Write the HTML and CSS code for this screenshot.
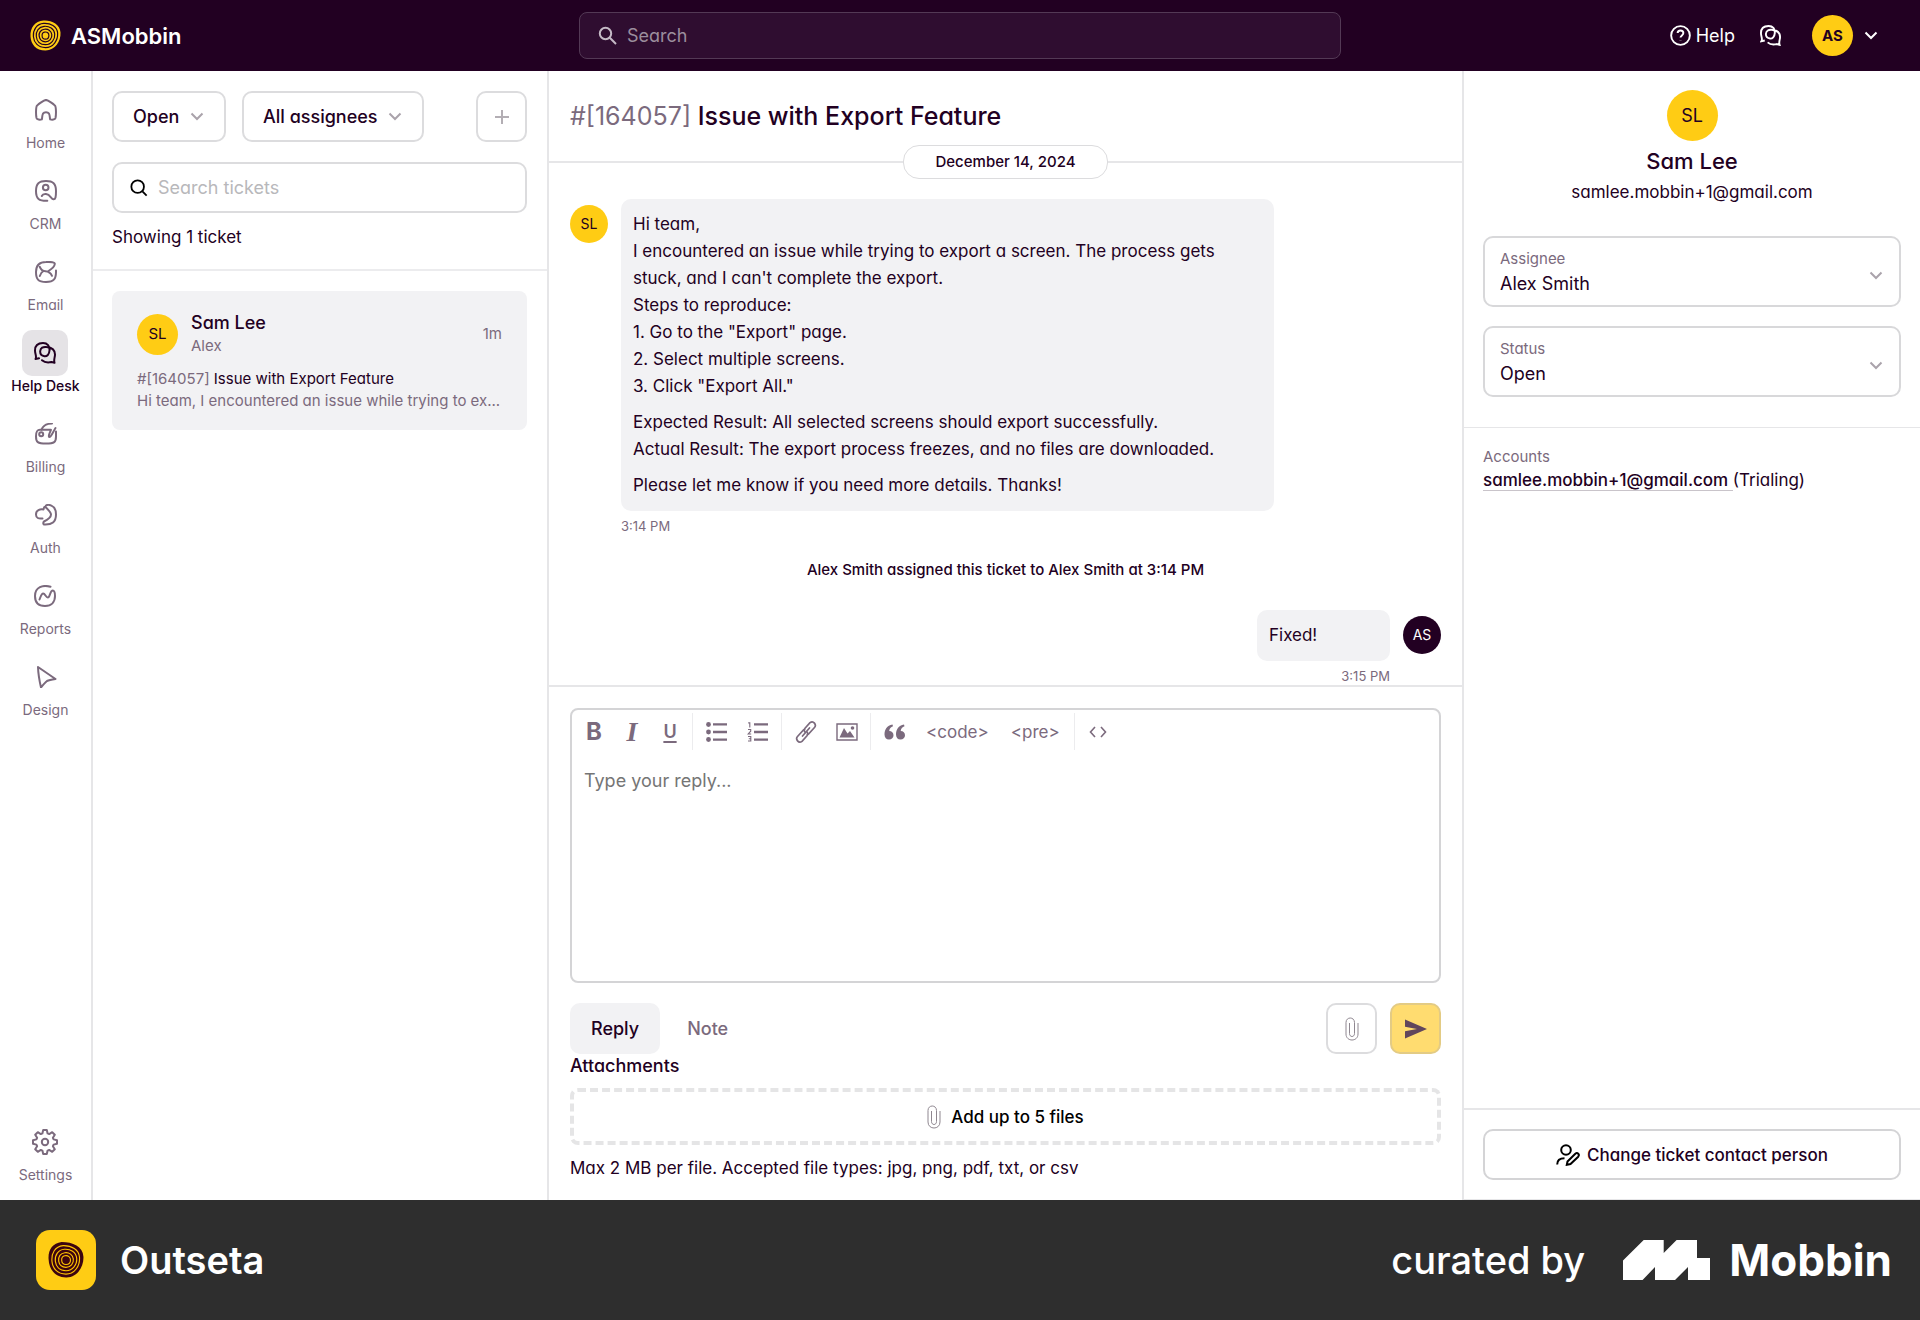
FILE: index.html
```html
<!DOCTYPE html>
<html lang="en">
<head>
    <meta charset="UTF-8">
    <meta name="viewport" content="width=device-width, initial-scale=1.0">
    <title>Help Desk - Issue with Export Feature</title>
    <link rel="stylesheet" href="styles.css">
</head>
<body>
    <header class="topbar">
        <a href="#" class="brand">
            <svg class="brand-logo" viewBox="0 0 32 32">
                <path fill="#ffcc14" d="M14 .5C22 0 31 4 31.5 13C32 22 26 31.5 16 31.5C6 31.5 1 25 .5 17C0 8 5 1 14 .5Z"/>
                <g fill="none" stroke="#220022" stroke-width="1.2">
                    <path d="M14 3.5C21 3 28 6.500 28.500 13.500C29 21 24 28.500 16 28.500C8 28.500 4 23 3.500 17C3 10 7 4 14 3.500Z"/>
                    <path d="M14.500 6.500C20 6 25 9 25.500 14.500C26 20 22 25.500 16 25.500C10 25.500 7 21.500 6.500 17C6 11.500 9 7 14.500 6.500Z"/>
                    <path d="M15 9.500C19 9 22 11.500 22.500 15C23 19 20 22.500 16 22.500C12 22.500 10 20 9.500 17C9 13 11 10 15 9.500Z"/>
                    <path d="M15 12.500C18 12 19.500 13.500 19.500 16C19.500 18.500 18.500 19.800 16 19.800C13.500 19.800 12.600 18.500 12.500 16.500C12.300 14.500 13 12.800 15 12.500Z"/>
                </g>
            </svg>
            <span>ASMobbin</span>
        </a>
        <label class="global-search">
            <svg viewBox="0 0 20 20"><circle cx="7.500" cy="7.500" r="5.700"/><path d="M11.800 11.800L18 18"/></svg>
            <input type="search" placeholder="Search" aria-label="Search">
        </label>
        <div class="topbar-actions">
            <a href="#" class="help-link">
                <svg viewBox="0 0 22 22"><circle cx="11" cy="11" r="9.800"/><path d="M8 8.500C8 4.800 14 4.800 14 8.500C14 11 11 10.800 11 13.200"/><path d="M11 16.200v.3" stroke-width="2.400"/></svg>
                Help
            </a>
            <button class="icon-button" aria-label="Tickets">
                <svg viewBox="0 0 22 22"><path d="M5 16.300L1.500 17C3 14.500 1 12 1 8.500C1 3.500 4 1 9 1C13.500 1 15.800 4 15.500 8.500C15.200 12.500 13 14.500 10.500 14.200C7.500 13.800 6 12 6.200 9.200C6.500 6 9 4.500 12.500 5C18 5.500 21 8 21 12.500C21 15.500 19.500 17.500 20.500 20.800L17.500 20C14 20.800 10 20 8 18.200"/></svg>
            </button>
            <button class="account-button" aria-label="Account">
                <span class="avatar avatar-bold">AS</span>
                <svg class="chevron" viewBox="0 0 14 9"><path d="M1.500 1.500L7 7L12.500 1.500"/></svg>
            </button>
        </div>
    </header>

    <div class="app">
        <nav class="sidebar">
            <a href="#" class="nav-item">
                <span class="nav-icon"><svg viewBox="0 0 22 22"><path d="M11 .9C9 1.200 4 4.600 2 6.600C.8 8 .8 16 1.500 19C2 20.800 5 21 6.800 20.400C7.300 19 7 16.500 8 14.600C9.200 12.800 12.800 12.800 14 14.600C15 16.500 14.700 19 15.200 20.400C17 21 20 20.800 20.500 19C21.200 16 21.200 8 20 6.600C18 4.600 13 1.200 11 .9Z"/></svg></span>
                Home
            </a>
            <a href="#" class="nav-item">
                <span class="nav-icon"><svg viewBox="0 0 22 22"><path d="M12.300 20.800C4 21 1 19 1 11C1 3.500 4 1 11 1S21 3.500 21 11C21 17 20.500 19.500 18.500 19.300C16 19 15.500 14.500 11 14C9 13.800 7.500 14.500 6.800 16"/><circle cx="10.700" cy="7.500" r="2.800"/></svg></span>
                CRM
            </a>
            <a href="#" class="nav-item">
                <span class="nav-icon"><svg viewBox="0 0 22 22"><path d="M21 9.500C21.200 18 19 21 11 21S1 18 1 11S4 1 11 1C16 .8 20 1 19.800 3C19.500 5.500 16 8.500 13.500 10"/><path d="M4.800 5.800C5.800 8.500 7.500 10 10.500 10.200S15.500 11.500 17 14.800M4.800 15C5.500 13 6.500 11.200 8.200 10.200"/></svg></span>
                Email
            </a>
            <a href="#" class="nav-item active">
                <span class="nav-icon"><svg viewBox="0 0 22 22"><path d="M5 16.300L1.500 17C3 14.500 1 12 1 8.500C1 3.500 4 1 9 1C13.500 1 15.800 4 15.500 8.500C15.200 12.500 13 14.500 10.500 14.200C7.500 13.800 6 12 6.200 9.200C6.500 6 9 4.500 12.500 5C18 5.500 21 8 21 12.500C21 15.500 19.500 17.500 20.500 20.800L17.500 20C14 20.800 10 20 8 18.200"/></svg></span>
                Help Desk
            </a>
            <a href="#" class="nav-item">
                <span class="nav-icon"><svg viewBox="0 0 22 22"><path d="M17 .6C11 .6 8 3 6.500 6.600"/><path d="M20.500 5C18 9 16 14 14.500 14S14.500 10 16 6.800H5C2 6.800 1 8.500 1 13.500C1 19 2.500 20.600 11 20.600S21 19 21 13.500V8.500"/><circle cx="6.200" cy="11.300" r="2"/></svg></span>
                Billing
            </a>
            <a href="#" class="nav-item">
                <span class="nav-icon"><svg viewBox="0 0 22 22"><path d="M11 1.500C12 .8 21 -.5 21 10.500C21 18 17 21 9 20.500C8 20 8 18.500 9 17.500C13 15.500 16 12.500 16 10.500C16 8.500 12 4.500 10.500 3C9 2.200 9 4 8.500 5.500C5 5 1 6 1 10.500C1 14 3.500 15 7.500 14.500"/></svg></span>
                Auth
            </a>
            <a href="#" class="nav-item">
                <span class="nav-icon"><svg viewBox="0 0 22 22"><path d="M16.500 1.800C9 -.5 1 2 1 11C1 18 4.500 21 11 21S21 17 21 11C21 8 20.500 5.500 18.800 5.500C16 5.500 16 12.500 13.800 12.500C11.800 12.500 11.200 8.500 9.200 8.500C7.500 8.500 6.500 12 5.500 14.500"/></svg></span>
                Reports
            </a>
            <a href="#" class="nav-item">
                <span class="nav-icon"><svg viewBox="0 0 22 22"><path d="M3 1L20.500 13C17 13.500 14 14 12 15C10 16.500 8 19 6 21.500C4.500 15 3.200 8 3 1Z"/></svg></span>
                Design
            </a>
            <a href="#" class="nav-item nav-settings">
                <span class="nav-icon"><svg class="gear" viewBox="-13 -13 26 26"><path d="M-2.600 -8.600L-1.800 -12H1.800L2.600 -8.600L4.200 -7.900L7.200 -9.800L9.800 -7.200L7.900 -4.200L8.600 -2.600L12 -1.800V1.800L8.600 2.600L7.900 4.200L9.800 7.200L7.200 9.800L4.200 7.900L2.600 8.600L1.800 12H-1.800L-2.600 8.600L-4.200 7.900L-7.200 9.800L-9.800 7.200L-7.900 4.200L-8.600 2.600L-12 1.800V-1.800L-8.600 -2.600L-7.900 -4.200L-9.800 -7.200L-7.200 -9.800L-4.200 -7.900Z"/><circle r="3.200"/></svg></span>
                Settings
            </a>
        </nav>

        <section class="ticket-list">
            <div class="filters">
                <div class="filter-row">
                    <div class="filter-select">
                        <select aria-label="Status filter"><option>Open</option></select>
                        <svg class="chevron" viewBox="0 0 14 9"><path d="M1.500 1.500L7 7L12.500 1.500"/></svg>
                    </div>
                    <div class="filter-select">
                        <select aria-label="Assignee filter"><option>All assignees</option></select>
                        <svg class="chevron" viewBox="0 0 14 9"><path d="M1.500 1.500L7 7L12.500 1.500"/></svg>
                    </div>
                    <button class="square-button add-button" aria-label="New ticket">
                        <svg width="16" height="16" viewBox="0 0 16 16"><path d="M8 1v14M1 8h14"/></svg>
                    </button>
                </div>
                <label class="ticket-search">
                    <svg viewBox="0 0 20 20"><circle cx="8.500" cy="8.500" r="7"/><path d="M13.800 13.800L18.500 18.500"/></svg>
                    <input type="search" placeholder="Search tickets" aria-label="Search tickets">
                </label>
                <p class="ticket-count">Showing 1 ticket</p>
            </div>
            <a href="#" class="ticket-card">
                <div class="ticket-head">
                    <span class="avatar">SL</span>
                    <div class="ticket-people">
                        <strong>Sam Lee</strong>
                        <span>Alex</span>
                    </div>
                    <time>1m</time>
                </div>
                <p class="ticket-subject"><span>#[164057]</span> Issue with Export Feature</p>
                <p class="ticket-preview">Hi team, I encountered an issue while trying to ex...</p>
            </a>
        </section>

        <main class="thread">
            <h1><span>#[164057]</span> Issue with Export Feature</h1>
            <div class="date-divider"><span>December 14, 2024</span></div>

            <div class="messages">
                <article class="message">
                    <span class="avatar avatar-small">SL</span>
                    <div class="message-body">
                        <div class="bubble">
                            <p>Hi team,<br>I encountered an issue while trying to export a screen. The process gets<br>stuck, and I can't complete the export.<br>Steps to reproduce:<br>1. Go to the "Export" page.<br>2. Select multiple screens.<br>3. Click "Export All."</p>
                            <p>Expected Result: All selected screens should export successfully.<br>Actual Result: The export process freezes, and no files are downloaded.</p>
                            <p>Please let me know if you need more details. Thanks!</p>
                        </div>
                        <time>3:14 PM</time>
                    </div>
                </article>
                <p class="event">Alex Smith assigned this ticket to Alex Smith at 3:14 PM</p>
                <article class="message outgoing">
                    <span class="avatar avatar-small avatar-dark">AS</span>
                    <div class="message-body">
                        <div class="bubble"><p>Fixed!</p></div>
                        <time>3:15 PM</time>
                    </div>
                </article>
            </div>

            <form class="composer">
                <div class="editor">
                    <div class="toolbar">
                        <div class="tool-group tool-group-text">
                            <button type="button" class="tool-bold">B</button>
                            <button type="button" class="tool-italic">I</button>
                            <button type="button" class="tool-underline">U</button>
                        </div>
                        <div class="tool-group">
                            <button type="button" aria-label="Bullet list"><svg width="22" height="20" viewBox="0 0 22 20"><circle cx="2.500" cy="2.500" r="2.400"/><circle cx="2.500" cy="10" r="2.400"/><circle cx="2.500" cy="17.500" r="2.400"/><path d="M7 1.200h14v2.400H7zM7 8.800h14v2.400H7zM7 16.400h14v2.400H7z"/></svg></button>
                            <button type="button" aria-label="Numbered list"><svg width="22" height="20" viewBox="0 0 22 20"><path d="M7 1.200h14v2.400H7zM7 8.800h14v2.400H7zM7 16.400h14v2.400H7z"/><path d="M1.200 .9h1.600v4.600M1 7.500h2.700v1.700L1.200 12h3M1 14.500h2.800v4.500H1M1.800 16.700h2" fill="none" stroke="currentColor" stroke-width="1.100"/></svg></button>
                        </div>
                        <div class="tool-group">
                            <button type="button" aria-label="Link"><svg width="22" height="24" viewBox="0 0 22 24" fill="none" stroke="currentColor" stroke-width="1.700" stroke-linecap="round"><path d="M7.500 16L14.500 8"/><path d="M9.500 9.500L8.500 10L2.500 16.500C.2 19 3.500 24 7 21.300L12 15.700C13 14.500 12.800 13 12 12"/><path d="M12.500 14.500L13.500 14L19.500 7.500C21.800 5 18.500 0 15 2.700L10 8.300C9 9.500 9.200 11 10 12"/></svg></button>
                            <button type="button" aria-label="Image"><svg width="22" height="18" viewBox="0 0 22 18"><path d="M1 1h20v16H1z" fill="none" stroke="currentColor" stroke-width="1.400"/><path d="M3.500 14.500L8 5l3.500 5.500L14 8l4.500 6.500z"/><circle cx="16.500" cy="5" r="1.800"/></svg></button>
                        </div>
                        <div class="tool-group">
                            <button type="button" aria-label="Quote"><svg width="22" height="16" viewBox="0 0 22 16"><path d="M8.500 .5C3 1.500 .5 5.500 .5 10.500C.5 13.500 2.300 15.500 5 15.500C7.700 15.500 9.500 13.700 9.500 11.200C9.500 8.700 7.800 7 5.200 7C5.500 4.500 6.800 3 9 2.200Z"/><path d="M20 .5C14.500 1.500 12 5.500 12 10.500C12 13.500 13.800 15.500 16.500 15.500C19.200 15.500 21 13.700 21 11.200C21 8.700 19.300 7 16.700 7C17 4.500 18.300 3 20.500 2.200Z"/></svg></button>
                            <button type="button" class="tool-tag">&lt;code&gt;</button>
                            <button type="button" class="tool-tag">&lt;pre&gt;</button>
                        </div>
                        <div class="tool-group">
                            <button type="button" aria-label="Source"><svg width="18" height="12" viewBox="0 0 18 12" fill="none" stroke="currentColor" stroke-width="1.600"><path d="M6 1L1.500 6L6 11M12 1l4.500 5L12 11"/></svg></button>
                        </div>
                    </div>
                    <textarea placeholder="Type your reply..." aria-label="Reply"></textarea>
                </div>
                <div class="composer-actions">
                    <button type="button" class="tab active">Reply</button>
                    <button type="button" class="tab">Note</button>
                    <button type="button" class="square-button attach-button" aria-label="Attach file">
                        <svg class="clip" viewBox="0 0 14 24"><path d="M4.500 6V16.500C4.500 20.500 9.500 20.500 9.500 16.500V5.500C9.500 -.5 1 -.5 1 5.500V17C1 25 13 25 13 17V6"/></svg>
                    </button>
                    <button type="submit" class="square-button send-button" aria-label="Send">
                        <svg width="22" height="20" viewBox="0 0 22 20"><path d="M0 .5L22 10L0 19.500V12.300L12 10L0 7.700Z"/></svg>
                    </button>
                </div>
                <p class="attachments-title">Attachments</p>
                <button type="button" class="dropzone">
                    <svg class="clip" viewBox="0 0 14 24"><path d="M4.500 6V16.500C4.500 20.500 9.500 20.500 9.500 16.500V5.500C9.500 -.5 1 -.5 1 5.500V17C1 25 13 25 13 17V6"/></svg>
                    Add up to 5 files
                </button>
                <p class="attachments-hint">Max 2 MB per file. Accepted file types: jpg, png, pdf, txt, or csv</p>
            </form>
        </main>

        <aside class="details">
            <div class="contact">
                <span class="avatar avatar-large">SL</span>
                <h2>Sam Lee</h2>
                <p>samlee.mobbin+1@gmail.com</p>
            </div>
            <div class="fields">
                <div class="field">
                    <label for="assignee">Assignee</label>
                    <select id="assignee"><option>Alex Smith</option></select>
                    <svg class="chevron" viewBox="0 0 14 9"><path d="M1.500 1.500L7 7L12.500 1.500"/></svg>
                </div>
                <div class="field">
                    <label for="status">Status</label>
                    <select id="status"><option>Open</option></select>
                    <svg class="chevron" viewBox="0 0 14 9"><path d="M1.500 1.500L7 7L12.500 1.500"/></svg>
                </div>
            </div>
            <div class="accounts">
                <h3>Accounts</h3>
                <p><a href="#">samlee.mobbin+1@gmail.com </a>(Trialing)</p>
            </div>
            <div class="details-footer">
                <button class="change-button">
                    <svg viewBox="0 0 24 22"><circle cx="10" cy="6" r="4.800"/><path d="M1.200 20.500C1.200 16.500 4 14.300 8.500 14.300"/><path d="M11.500 17.500L19.300 9.700C21.500 8 24 10.500 22.200 12.700L14.500 20L10.800 20.800Z"/></svg>
                    Change ticket contact person
                </button>
            </div>
        </aside>
    </div>

    <footer class="credit">
        <div class="credit-app">
            <span class="app-icon">
                <svg viewBox="0 0 32 32">
                    <path fill="#3c0410" d="M12 0C22 0 31 4 31.500 13C32 22 26 31.800 16 31.500C7 31.500 1 25 .5 15C0 7 4 1 12 0Z"/>
                    <g fill="none" stroke="#ffc400" stroke-width="1">
                        <path d="M13.500 3.200C21 3 27.500 7 28 13.500C28.500 21 24 28.500 16 28.500C8 28.500 4 23 3.500 17C3 10 6 4 13.500 3.200Z"/>
                        <path d="M14.500 6.500C20 6 25 9 25.500 14.500C26 20 22 25.500 16 25.500C10 25.500 7 21.500 6.500 17C6 11.500 9 7 14.500 6.500Z"/>
                        <path d="M15 9.500C19 9 22 11.500 22.500 15C23 19 20 22.500 16 22.500C12 22.500 10 20 9.500 17C9 13 11 10 15 9.500Z"/>
                        <path d="M15 12.200C18 11.700 20 13.500 20 16C20 18.500 18.500 20 16 20C13.500 20 12.300 18.500 12.200 16.500C12 14.500 13 12.500 15 12.200Z"/>
                    </g>
                </svg>
            </span>
            <span class="app-name">Outseta</span>
        </div>
        <div class="credit-source">
            <span>curated by</span>
            <svg viewBox="0 0 87 40" fill="#fff"><path d="M0 20.500L20.700 0H40.700V13L53.600 0H74V18H87V40H65V27L52 40H32V27L19.600 40H0Z"/></svg>
            <strong>Mobbin</strong>
        </div>
    </footer>
</body>
</html>
```
FILE: styles.css
```css
* {
    margin: 0;
    padding: 0;
    box-sizing: border-box;
}

body {
    font-family: Inter, sans-serif;
    font-feature-settings: 'cv11';
    font-size: 17px;
    line-height: 24px;
    color: #220022;
    background: #fff;
    min-height: 100vh;
    display: flex;
    flex-direction: column;
}

button,
input,
select,
textarea {
    font: inherit;
    font-feature-settings: inherit;
    color: inherit;
    background: none;
    border: none;
    outline: none;
    appearance: none;
}

input,
select,
textarea {
    font-size: 18px;
}

button {
    cursor: pointer;
}

a {
    color: inherit;
    text-decoration: none;
}

svg {
    display: block;
    flex-shrink: 0;
}

/* Top bar */
.topbar {
    height: 71px;
    background: #220022;
    color: #fff;
    display: grid;
    grid-template-columns: 1fr minmax(0, 762px) 1fr;
    align-items: center;
    padding: 0 30px;
}

.brand {
    display: flex;
    align-items: center;
    gap: 10px;
    font-size: 22px;
    font-weight: 600;
}

.brand-logo {
    width: 31px;
    height: 31px;
}

.global-search {
    height: 47px;
    display: flex;
    align-items: center;
    gap: 9px;
    padding: 0 18px;
    background: #2f0d30;
    border: 1px solid #533955;
    border-radius: 8px;
}

.global-search svg {
    width: 20px;
    height: 20px;
    fill: none;
    stroke: #c5bac6;
    stroke-width: 2;
}

.global-search input {
    flex: 1;
}

.global-search input::placeholder {
    color: #9c8e9d;
}

.topbar-actions {
    display: flex;
    align-items: center;
    justify-content: flex-end;
    padding-right: 12px;
}

.topbar-actions svg {
    fill: none;
    stroke: #fff;
    stroke-width: 2;
}

.help-link {
    display: flex;
    align-items: center;
    gap: 5px;
    margin-right: 25px;
    font-size: 18px;
}

.help-link svg,
.icon-button svg {
    width: 21px;
    height: 21px;
}

.icon-button {
    margin-right: 31px;
}

.account-button {
    display: flex;
    align-items: center;
    gap: 11px;
}

.chevron {
    width: 14px;
    height: 9px;
    fill: none;
    stroke: #aaa3ab;
    stroke-width: 2;
}

.avatar {
    width: 41px;
    height: 41px;
    border-radius: 50%;
    background: #ffcc14;
    color: #220022;
    display: flex;
    align-items: center;
    justify-content: center;
    flex-shrink: 0;
    font-size: 15px;
}

.avatar-bold {
    font-weight: 700;
}

.avatar-small {
    width: 38px;
    height: 38px;
    font-size: 14px;
}

.avatar-large {
    width: 51px;
    height: 51px;
    font-size: 18px;
}

.avatar-dark {
    background: #220022;
    color: #fff;
}

/* Main layout */
.app {
    flex: 1;
    display: grid;
    grid-template-columns: 93px 456px minmax(0, 1fr) 458px;
}

.sidebar {
    border-right: 2px solid #e6e6e8;
    display: flex;
    flex-direction: column;
    align-items: center;
    gap: 15px;
    padding: 16px 0 15px;
}

.nav-item {
    display: flex;
    flex-direction: column;
    align-items: center;
    font-size: 14px;
    line-height: 20px;
    color: #7b6a7d;
    white-space: nowrap;
}

.nav-icon {
    width: 46px;
    height: 46px;
    border-radius: 10px;
    display: flex;
    align-items: center;
    justify-content: center;
}

.nav-icon svg {
    width: 22px;
    height: 22px;
    fill: none;
    stroke: currentColor;
    stroke-width: 2;
    stroke-linecap: round;
    stroke-linejoin: round;
}

.nav-icon .gear {
    width: 26px;
    height: 26px;
}

.nav-item.active {
    color: #220022;
    font-weight: 500;
}

.nav-item.active .nav-icon {
    background: #e5e3e6;
}

.nav-settings {
    margin-top: auto;
}

/* Ticket list */
.ticket-list {
    border-right: 2px solid #e6e6e8;
}

.filters {
    padding: 20px 20px 20px 19px;
    border-bottom: 2px solid #ececee;
}

.filter-row {
    display: flex;
    gap: 16px;
    margin-bottom: 20px;
}

.filter-select {
    position: relative;
}

.filter-select select {
    height: 51px;
    padding: 0 44px 0 19px;
    border: 2px solid #dcdcde;
    border-radius: 10px;
    font-weight: 500;
}

.filter-select .chevron {
    position: absolute;
    right: 22px;
    top: 21px;
    pointer-events: none;
}

.square-button {
    width: 51px;
    height: 51px;
    border: 2px solid #dcdcde;
    border-radius: 10px;
    display: flex;
    align-items: center;
    justify-content: center;
}

.add-button {
    margin-left: auto;
}

.add-button svg {
    stroke: #b3aeb4;
    stroke-width: 2;
}

.ticket-search {
    height: 51px;
    display: flex;
    align-items: center;
    gap: 10px;
    padding: 0 16px;
    border: 2px solid #dcdcde;
    border-radius: 10px;
}

.ticket-search svg {
    width: 18px;
    height: 18px;
    fill: none;
    stroke: #000;
    stroke-width: 2;
}

.ticket-search input {
    flex: 1;
}

.ticket-search input::placeholder {
    color: #b8b8bb;
}

.ticket-count {
    margin-top: 12px;
}

.ticket-card {
    display: block;
    margin: 20px 20px 0 19px;
    padding: 20px 25px 18px;
    background: #f2f2f4;
    border-radius: 8px;
}

.ticket-head {
    display: flex;
    align-items: center;
    gap: 13px;
    margin-bottom: 11px;
}

.ticket-people {
    flex: 1;
    display: flex;
    flex-direction: column;
}

.ticket-people strong {
    font-size: 18px;
    font-weight: 500;
    line-height: 24px;
}

.ticket-people span,
.ticket-head time,
.ticket-preview,
.ticket-subject span {
    color: #7b6a7d;
}

.ticket-people span,
.ticket-head time,
.ticket-preview,
.ticket-subject {
    font-size: 15px;
    line-height: 22px;
}

.ticket-preview {
    white-space: nowrap;
}

/* Thread */
.thread {
    display: flex;
    flex-direction: column;
}

.thread h1 {
    padding: 29px 21px 12px;
    font-size: 25px;
    line-height: 33px;
    font-weight: 500;
}

.thread h1 span {
    color: #7b6a7d;
    font-weight: 400;
}

.date-divider {
    display: flex;
    align-items: center;
}

.date-divider::before,
.date-divider::after {
    content: '';
    flex: 1;
    height: 2px;
    background: #e6e6e8;
}

.date-divider span {
    padding: 4px 31px;
    border: 1px solid #dcdcde;
    border-radius: 16px;
    font-size: 15px;
    font-weight: 500;
}

.messages {
    flex: 1;
    padding: 20px 21px 0;
}

.message {
    display: flex;
    gap: 13px;
}

.message .avatar {
    margin-top: 6px;
}

.message-body {
    width: 75%;
    min-width: 133px;
}

.bubble {
    padding: 12px;
    background: #f2f2f4;
    border-radius: 10px;
    line-height: 27px;
}

.bubble p + p {
    margin-top: 9px;
}

.message time {
    display: block;
    font-size: 13px;
    line-height: 18px;
    margin-top: 6px;
    color: #7b6a7d;
}

.message.outgoing {
    flex-direction: row-reverse;
}

.outgoing .message-body {
    width: auto;
}

.outgoing time {
    text-align: right;
}

.event {
    margin: 23px 0 28px;
    text-align: center;
    font-size: 15px;
    font-weight: 500;
}

.composer {
    border-top: 2px solid #e6e6e8;
    padding: 21px 21px 20px;
}

.editor {
    border: 2px solid #d4d4d6;
    border-radius: 8px;
    height: 275px;
    display: flex;
    flex-direction: column;
}

.toolbar {
    display: flex;
    padding-top: 3px;
    color: #7b6a7d;
    font-feature-settings: normal;
}

.tool-group {
    display: flex;
    height: 37px;
    padding: 0 3px;
}

.tool-group + .tool-group {
    border-left: 1px solid #ececee;
}

.tool-group button {
    width: 41px;
    display: flex;
    align-items: center;
    justify-content: center;
}

.tool-group-text button {
    width: 38px;
}

.tool-group svg {
    fill: currentColor;
}

.tool-group svg[fill="none"] {
    fill: none;
}

.tool-group .tool-bold {
    font-size: 24px;
    font-weight: 700;
}

.tool-group .tool-italic {
    font-family: 'Liberation Serif', serif;
    font-size: 28px;
    font-weight: 700;
    font-style: italic;
}

.tool-group .tool-underline {
    font-size: 18px;
    font-weight: 600;
    text-decoration: underline;
    text-decoration-thickness: 2px;
    text-underline-offset: 3px;
}

.tool-group .tool-tag {
    width: auto;
    padding: 0 11px;
}

.editor textarea {
    flex: 1;
    padding: 19px 12px;
    resize: none;
    font-feature-settings: normal;
}

.editor textarea::placeholder {
    color: #757575;
}

.composer-actions {
    display: flex;
    margin-top: 20px;
}

.tab {
    height: 51px;
    padding: 0 21px;
    border-radius: 10px;
    font-size: 18px;
    font-weight: 500;
    color: #7b6a7d;
}

.tab + .tab {
    margin-left: 6px;
}

.tab.active {
    background: #f2f2f4;
    color: #220022;
}

.attach-button {
    margin-left: auto;
    margin-right: 13px;
}

.clip {
    width: 14px;
    height: 24px;
    fill: none;
    stroke: #8f8790;
    stroke-width: 1;
}

.send-button {
    background: #ffdc70;
    border-color: #e3cb84;
}

.send-button svg {
    fill: #61465c;
}

.attachments-title {
    font-size: 18px;
    font-weight: 500;
    margin-bottom: 10px;
}

.dropzone {
    width: 100%;
    height: 57px;
    border: 4px dashed #e5e5e6;
    border-radius: 8px;
    display: flex;
    align-items: center;
    justify-content: center;
    gap: 10px;
    font-weight: 500;
    color: #000;
}

.attachments-hint {
    margin-top: 11px;
}

/* Ticket details */
.details {
    border-left: 2px solid #e6e6e8;
    display: flex;
    flex-direction: column;
}

.contact {
    display: flex;
    flex-direction: column;
    align-items: center;
    padding: 19px 20px 32px;
}

.contact h2 {
    font-size: 22px;
    line-height: 32px;
    font-weight: 500;
    margin: 4px 0 3px;
}

.fields {
    display: flex;
    flex-direction: column;
    gap: 19px;
    padding: 0 19px 30px;
    border-bottom: 1px solid #e6e6e8;
}

.field {
    position: relative;
    height: 71px;
    padding: 10px 15px;
    border: 2px solid #d8d8da;
    border-radius: 10px;
}

.field label,
.accounts h3 {
    display: block;
    font-size: 15px;
    line-height: 22px;
    font-weight: 400;
    color: #7b6a7d;
}

.field select {
    display: block;
    width: 100%;
    height: 28px;
}

.field .chevron {
    position: absolute;
    right: 16px;
    top: 33px;
    pointer-events: none;
}

.accounts {
    flex: 1;
    padding: 18px 19px;
}

.accounts a {
    font-weight: 500;
    border-bottom: 1px solid #c9c4ca;
    white-space: pre;
}

.details-footer {
    padding: 19px;
    border-top: 2px solid #e6e6e8;
    border-bottom: 1px solid #e6e6e8;
}

.change-button {
    width: 100%;
    height: 51px;
    border: 2px solid #d4d4d6;
    border-radius: 10px;
    display: flex;
    align-items: center;
    justify-content: center;
    gap: 7px;
    font-weight: 500;
}

.change-button svg {
    width: 24px;
    height: 22px;
    fill: none;
    stroke: #000;
    stroke-width: 2;
}

/* Footer */
.credit {
    height: 120px;
    padding: 0 28px 0 36px;
    background: #2e2e2e;
    color: #fff;
    font-feature-settings: normal;
    font-size: 38px;
    line-height: 48px;
    font-weight: 500;
    display: flex;
    align-items: center;
    justify-content: space-between;
}

.credit-app,
.credit-source {
    display: flex;
    align-items: center;
}

.app-icon {
    width: 60px;
    height: 60px;
    margin-right: 24px;
    border-radius: 14px;
    background: #ffcc14;
    display: flex;
    align-items: center;
    justify-content: center;
}

.app-icon svg {
    width: 36px;
    height: 36px;
}

.app-name {
    font-weight: 600;
}

.credit-source svg {
    width: 87px;
    height: 40px;
    margin: 0 19px 0 38px;
}

.credit-source strong {
    font-size: 44px;
    font-weight: 700;
}
```
